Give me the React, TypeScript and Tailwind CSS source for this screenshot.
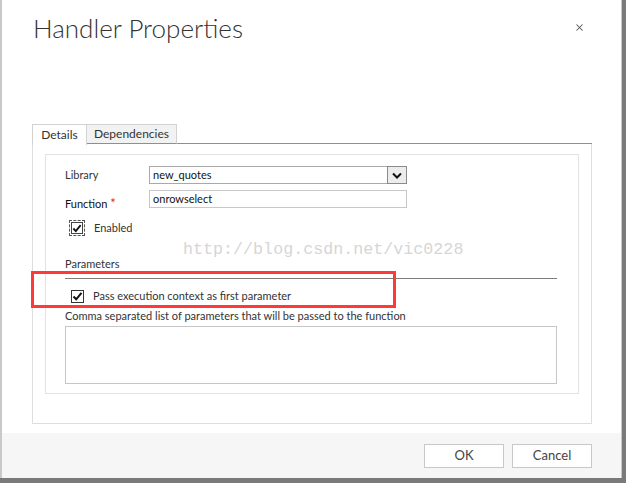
import { X } from 'lucide-react';

const font = { fontFamily: '"Segoe UI", Lato, "Liberation Sans", sans-serif' };

function Check() {
  return (
    <svg width="11" height="11" viewBox="0 0 11 11" className="block">
      <path d="M1.5 5.5 L4.2 8.3 L9.5 1.8" fill="none" stroke="#111" strokeWidth="2" />
    </svg>
  );
}

export default function App() {
  return (
    <div
      className="relative w-[626px] h-[483px] overflow-hidden bg-[#7a7a7a] text-[#222]"
      style={font}
    >
      {/* dialog */}
      <div className="w-[622px] h-[478px] bg-white border-l-2 border-r border-[#c9c9c9] flex flex-col">
        {/* header */}
        <div className="flex justify-between items-start pl-[31px] pr-[36px] pt-[10px]">
          <h1 className="text-[26px] leading-[36px] font-light text-[#333]">Handler Properties</h1>
          <button className="mt-[12px] text-[#555]">
            <X size={11} strokeWidth={2.2} />
          </button>
        </div>

        {/* tabs */}
        <div className="mt-[77px] ml-[30px] flex items-end text-[12px] leading-[18px] text-[#333]">
          <div className="h-[21px] w-[55px] border border-b-0 border-[#d2d2d2] bg-white flex items-center justify-center relative top-[1px]">
            Details
          </div>
          <div className="h-[20px] w-[90px] border border-l-0 border-[#d2d2d2] border-b-[#8f8f8f] bg-[#f2f2f2] flex items-center justify-center">
            Dependencies
          </div>
          <div className="flex-1 mr-[29px] border-b border-[#8f8f8f]" />
        </div>

        {/* tab panel */}
        <div className="ml-[30px] mr-[29px] h-[280px] border border-t-0 border-[#dedede] pt-[10px] pl-[12px] pr-[12px]">
          <div className="h-[240px] border border-[#e2e2e2] pl-[19px] pr-[21px] pt-[11px] text-[11px] text-[#333]">
            <div className="flex items-center h-[18px]">
              <span className="w-[84px]">Library</span>
              <div className="w-[258px] h-[18px] border border-[#a9a9a9] flex items-center justify-between pl-[3px]">
                <span className="text-[#111]">new_quotes</span>
                <span className="w-[20px] h-[18px] -mr-[1px] border border-[#8a8a8a] bg-[#ececec] flex items-center justify-center">
                  <svg width="10" height="7" viewBox="0 0 10 7">
                    <path d="M1 1.5 L5 5.5 L9 1.5" fill="none" stroke="#111" strokeWidth="2" />
                  </svg>
                </span>
              </div>
            </div>

            <div className="flex items-start h-[18px] mt-[6px]">
              <span className="w-[84px] mt-[4px] text-[#111]">
                Function <span className="text-[#d81e1e] text-[13px]">*</span>
              </span>
              <div className="w-[258px] h-[18px] border border-[#c8c8c8] flex items-center pl-[3px] text-[#111]">
                onrowselect
              </div>
            </div>

            <div className="flex items-center h-[16px] mt-[12px] ml-[4px]">
              <span className="w-[16px] h-[16px] border border-dashed border-[#555] flex items-center justify-center">
                <span className="w-[12px] h-[12px] border border-[#444] bg-white flex items-center justify-center">
                  <Check />
                </span>
              </span>
              <span className="ml-[9px]">Enabled</span>
            </div>

            <div className="mt-[20px] leading-[16px]">Parameters</div>
            <div className="mt-[6px] border-t border-[#7d7d7d]" />

            <div className="flex items-center h-[16px] mt-[9px] ml-[6px]">
              <span className="w-[13px] h-[13px] border border-[#333] bg-white flex items-center justify-center">
                <Check />
              </span>
              <span className="ml-[9px]">Pass execution context as first parameter</span>
            </div>

            <div className="mt-[4px] leading-[16px]">
              Comma separated list of parameters that will be passed to the function
            </div>
            <div className="mt-[2px] h-[58px] border border-[#c6c6c6] bg-white" />
          </div>
        </div>

        {/* footer */}
        <div className="mt-auto h-[45px] bg-[#f6f6f6] flex justify-end items-start pt-[11px] pr-[29px] gap-[8px] text-[13px] text-[#444]">
          <button className="w-[80px] h-[24px] bg-white border border-[#c8c8c8]">OK</button>
          <button className="w-[80px] h-[24px] bg-white border border-[#c8c8c8]">Cancel</button>
        </div>
      </div>

      {/* watermark */}
      <div
        className="absolute left-[183px] top-[240px] text-[16.7px] leading-[20px] text-[#d6d6d6] pointer-events-none"
        style={{ fontFamily: '"Liberation Mono", monospace' }}
      >
        http://blog.csdn.net/vic0228
      </div>

      {/* annotation */}
      <div className="absolute left-[31px] top-[271px] w-[365px] h-[37px] border-[3px] border-[#ff3838] pointer-events-none" />
    </div>
  );
}
